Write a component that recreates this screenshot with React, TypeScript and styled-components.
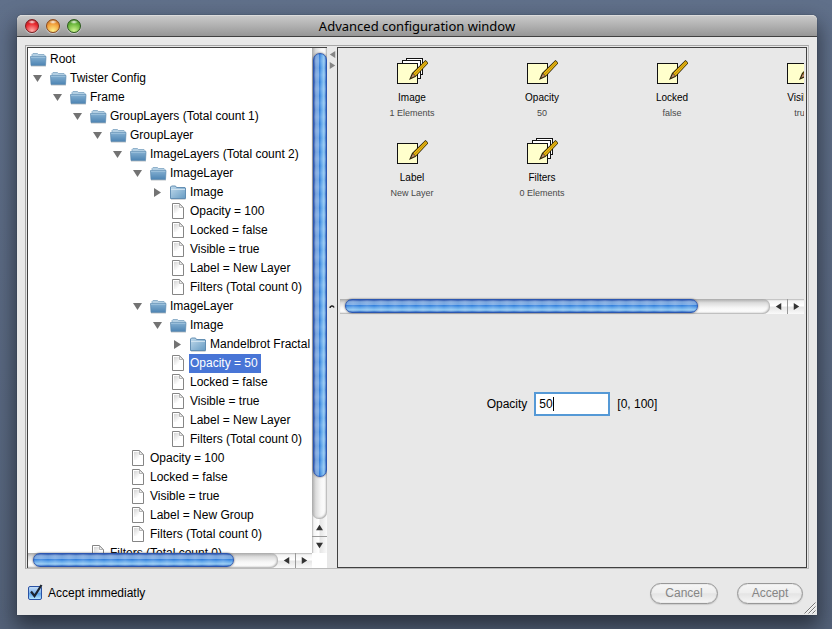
import React, { useState } from "react";
import styled, { createGlobalStyle, css } from "styled-components";

const GlobalStyle = createGlobalStyle`
  *, *::before, *::after { box-sizing: border-box; }
  body {
    margin: 0;
    font: 12px/19px "Liberation Sans", Arial, sans-serif;
    color: #000;
    background: linear-gradient(#60708a, #546279);
  }
  button, input { font: inherit; color: inherit; margin: 0; padding: 0; }
`;

const Desktop = styled.div`
  display: flex;
  height: 100vh;
  min-height: 400px;
  padding: 15px 15px 14px 17px;
  overflow: hidden;
`;

const Window = styled.main`
  flex: 1;
  min-width: 0;
  display: flex;
  flex-direction: column;
  background: #e8e8e8;
  border-radius: 5px 5px 0 0;
  box-shadow: 0 0 1px #1b212b, 0 10px 20px 2px rgba(16, 20, 26, 0.6);
`;

const TitleBar = styled.header`
  display: grid;
  grid-template-columns: 1fr auto 1fr;
  align-items: center;
  height: 22px;
  padding: 0 8px;
  border-radius: 5px 5px 0 0;
  border-top: 1px solid #dcdcdc;
  border-bottom: 1px solid #404040;
  background: linear-gradient(#c9c9c9, #969696);
`;

const Lights = styled.div`
  display: flex;
  gap: 7px;
`;

const Light = styled.button<{ $rim: string; $mid: string; $glow: string }>`
  width: 14px;
  height: 14px;
  border: 1px solid ${(p) => p.$rim};
  border-radius: 50%;
  background:
    radial-gradient(ellipse 4px 2px at 50% 2px, rgba(255, 255, 255, 0.9), rgba(255, 255, 255, 0) 100%),
    radial-gradient(circle at 50% 90%, ${(p) => p.$glow}, ${(p) => p.$mid} 60%, ${(p) => p.$rim} 110%);
  box-shadow: 0 1px 1px rgba(255, 255, 255, 0.5);
`;

const Title = styled.h1`
  margin: 0;
  font: 400 13px/20px "Noto Sans", "Open Sans", sans-serif;
  white-space: nowrap;
`;

const Frame = styled.div`
  flex: 1;
  min-height: 0;
  display: flex;
  margin: 8px 8px 0;
  padding: 1px 1px 0;
  border: 1px solid #a6a6a6;
  border-right-color: #bbb;
  border-bottom-color: #bbb;
`;

const TreePane = styled.section`
  flex: 0 0 300px;
  min-width: 0;
  display: grid;
  grid-template-columns: minmax(0, 1fr) 15px;
  grid-template-rows: minmax(0, 1fr) 15px;
  border-top: 1px solid #404040;
  border-left: 1px solid #404040;
  background: #fff;
`;

const Tree = styled.ul`
  margin: 0;
  padding: 2px;
  overflow: hidden;
  list-style: none;
`;

const TreeRow = styled.li<{ $depth: number }>`
  display: flex;
  align-items: center;
  height: 19px;
  padding-left: ${(p) => (p.$depth - 1) * 20}px;
  margin-right: -2px;
  white-space: nowrap;
`;

const Toggle = styled.button`
  flex: none;
  display: grid;
  place-items: center;
  width: 20px;
  height: 19px;
  padding-right: 5px;
  border: 0;
  background: none;
`;

const RootRow = styled(TreeRow)`
  padding-left: 0;
`;

const NodeIcon = styled.span`
  flex: none;
  display: grid;
  width: 19px;
  height: 19px;
`;

const NodeLabel = styled.span<{ $selected?: boolean }>`
  height: 19px;
  padding: 0 3px 0 1px;
  ${(p) =>
    p.$selected &&
    css`
      background: #4875d6;
      color: #fff;
    `}
`;

const aqua = (side: "right" | "bottom") => css`
  background:
    repeating-linear-gradient(
      to ${side === "right" ? "bottom" : "right"},
      rgba(255, 255, 255, 0) 0,
      rgba(255, 255, 255, 0.14) 7px,
      rgba(255, 255, 255, 0) 14px
    ),
    linear-gradient(
      to ${side},
      #2c55ac 0,
      #7ba5dc 15%,
      #78aae6 38%,
      #3380dd 46%,
      #64a8ea 64%,
      #93caf3 84%,
      #2d68c4 100%
    );
`;

const Bar = styled.div<{ $vertical?: boolean }>`
  display: flex;
  flex-direction: ${(p) => (p.$vertical ? "column" : "row")};
  background: linear-gradient(
    to ${(p) => (p.$vertical ? "right" : "bottom")},
    #b4b4b4,
    #f4f4f4 12%,
    #fff 45%,
    #e6e6e6 55%,
    #fafafa
  );
`;

const Track = styled.div<{ $vertical?: boolean }>`
  flex: 1;
  min-width: 0;
  min-height: 0;
  padding: ${(p) => (p.$vertical ? "5px 0 0 1px" : "0 0 0 5px")};
  border-radius: ${(p) => (p.$vertical ? "0 0 7px 7px" : "0 7px 7px 0")};
  background: linear-gradient(
    to ${(p) => (p.$vertical ? "right" : "bottom")},
    #a9a9a9,
    #dcdcdc 25%,
    #f7f7f7 60%,
    #fff
  );
  box-shadow: inset -1px -1px 2px #aaa;
`;

const Thumb = styled.div<{ $vertical?: boolean; $size: number }>`
  width: ${(p) => (p.$vertical ? "14px" : `${p.$size}%`)};
  height: ${(p) => (p.$vertical ? `${p.$size}%` : "14px")};
  border: 1px solid #2b56b0;
  border-radius: 7px;
  ${(p) => aqua(p.$vertical ? "right" : "bottom")}
  box-shadow: 0 0 2px #555;
`;

const Step = styled.button<{ $vertical?: boolean; $divided?: boolean }>`
  flex: none;
  display: grid;
  place-items: center;
  width: ${(p) => (p.$vertical ? "15px" : "17px")};
  height: ${(p) => (p.$vertical ? "17px" : "15px")};
  border: 0 solid #999;
  border-width: ${(p) => (p.$divided ? (p.$vertical ? "1px 0 0" : "0 0 0 1px") : "0")};
  background: none;
`;

const Splitter = styled.div`
  flex: 0 0 10px;
  display: flex;
  flex-direction: column;
  align-items: center;
  padding-top: 2px;
  background: #e8e8e8;
`;

const SplitButton = styled.button`
  display: grid;
  place-items: center;
  width: 9px;
  height: 11px;
  border: 0;
  background: none;
`;

const Grip = styled.div`
  flex: 1;
  display: grid;
  place-items: center;
  padding-bottom: 26px;
`;

const DetailPane = styled.section`
  flex: 1;
  min-width: 0;
  display: flex;
  flex-direction: column;
  padding: 0 2px;
  border: 1px solid #404040;
`;

const Items = styled.div`
  display: grid;
  grid-template-columns: repeat(4, 130px);
  grid-auto-rows: 80px;
  height: 251px;
  padding: 8px 7px;
  overflow: hidden;
`;

const Item = styled.button`
  display: flex;
  flex-direction: column;
  align-items: center;
  border: 0;
  background: none;
`;

const ItemName = styled.span`
  margin-top: 4px;
  font-size: 10px;
  line-height: 12px;
`;

const ItemInfo = styled.span`
  margin-top: 3px;
  font-size: 9px;
  line-height: 12px;
  color: #484848;
`;

const Editor = styled.form`
  flex: 1;
  display: flex;
  justify-content: center;
  align-items: flex-start;
  padding-top: 78px;
  line-height: 24px;
`;

const Field = styled.div`
  position: relative;
  margin: 0 7px;
`;

const FieldInput = styled.input`
  display: block;
  width: 76px;
  height: 24px;
  padding: 0 3px;
  border: 2px solid #5599d6;
  background: #fff;
  outline: 0;
  caret-color: transparent;
`;

const Caret = styled.span`
  position: absolute;
  top: 5px;
  width: 1px;
  height: 14px;
  background: #000;
  pointer-events: none;
`;

const Footer = styled.footer`
  flex: none;
  display: flex;
  align-items: center;
  justify-content: space-between;
  height: 46px;
  padding: 2px 0 0 11px;
`;

const CheckLabel = styled.label`
  position: relative;
  display: flex;
  align-items: center;
  gap: 6px;
`;

const CheckBox = styled.input`
  appearance: none;
  width: 14px;
  height: 14px;
  border: 1px solid #2a52a4;
  border-radius: 2px;
  background: linear-gradient(#c3dcf7, #7fb4ee 50%, #5ea5ec 55%, #b4e4fd);
`;

const Tick = styled.svg`
  position: absolute;
  left: 0;
  top: 0;
  pointer-events: none;
`;

const Actions = styled.div`
  align-self: stretch;
  display: flex;
  align-items: center;
`;

const PillButton = styled.button`
  width: 68px;
  height: 21px;
  margin-right: 19px;
  border: 1px solid #989898;
  border-radius: 11px;
  background: linear-gradient(#f6f6f6, #eee 45%, #e4e4e4 52%, #f6f6f6);
  box-shadow: inset 0 0 1px #999, 0 1px 1px #ccc;
  color: #858585;
  line-height: 18px;
  &:last-of-type { margin-right: 0; width: 66px; }
`;

const Resizer = styled.svg`
  align-self: flex-end;
  margin: 0 1px 1px;
`;

type Direction = "up" | "down" | "left" | "right";

const trianglePoints: Record<Direction, string> = {
  up: "0,8 4.5,1 9,8",
  down: "0,1 9,1 4.5,8",
  left: "8,0 8,9 1,4.5",
  right: "1,0 1,9 8,4.5",
};

function Triangle({ dir, size = 9, color = "#737373" }: { dir: Direction; size?: number; color?: string }) {
  return (
    <svg width={size} height={size} viewBox="0 0 9 9" aria-hidden="true">
      <polygon points={trianglePoints[dir]} fill={color} />
    </svg>
  );
}

function Gradients() {
  return (
    <svg width="0" height="0" style={{ position: "absolute" }} aria-hidden="true">
      <defs>
        <linearGradient id="folderOpen" x1="0" y1="0" x2="0" y2="1">
          <stop offset="0" stopColor="#86b1d2" />
          <stop offset="1" stopColor="#4d84b3" />
        </linearGradient>
        <linearGradient id="folderClosed" x1="0" y1="0" x2="1" y2="1">
          <stop offset="0" stopColor="#c2dbec" />
          <stop offset="1" stopColor="#669bc3" />
        </linearGradient>
        <linearGradient id="sheet" x1="0" y1="0" x2="1" y2="1">
          <stop offset="0" stopColor="#d4d4d4" />
          <stop offset="0.7" stopColor="#fff" />
        </linearGradient>
      </defs>
    </svg>
  );
}

function OpenFolder() {
  return (
    <svg width="17" height="19" viewBox="0 0 17 19" aria-hidden="true">
      <path d="M2 8V4.5l1-1h4.5l1 1H14l1 1V8z" fill="#b3cfe3" stroke="#7fa5c2" strokeWidth=".8" />
      <path d="M.5 6.500h15.500l-.5 9H1z" fill="url(#folderOpen)" stroke="#5886ad" strokeWidth=".7" />
      <path d="M1 7.200h14.500" stroke="#b4d2e7" strokeWidth=".7" />
      <path d="M1 16.200h15" stroke="#8c969e" strokeWidth=".7" opacity=".6" />
    </svg>
  );
}

function ClosedFolder() {
  return (
    <svg width="17" height="19" viewBox="0 0 17 19" aria-hidden="true">
      <path d="M.5 4l1-1h4l1 1.500H15l.5.5v10.500H.500z" fill="url(#folderClosed)" stroke="#5886ad" strokeWidth=".9" />
      <path d="M1 6.500h14" stroke="#d8e9f4" strokeWidth=".8" />
      <path d="M1 16.400h14.500" stroke="#8c969e" strokeWidth=".7" opacity=".6" />
    </svg>
  );
}

function Sheet() {
  return (
    <svg width="17" height="19" viewBox="0 0 17 19" aria-hidden="true">
      <path d="M2.500 1.500h7l4 4v11h-11z" fill="#fff" stroke="#858585" />
      <path d="M4 3h5v4h3v4H4z" fill="url(#sheet)" />
      <path d="M9.500 2v3.500H13z" fill="#f4f4f4" stroke="#a5a5a5" strokeWidth=".8" />
    </svg>
  );
}

function NoteIcon({ stacked }: { stacked?: boolean }) {
  return (
    <svg width="32" height="32" viewBox="0 0 32 32" aria-hidden="true">
      {stacked && (
        <g fill="#fff" stroke="#111">
          <rect x="10.500" y="2.500" width="16" height="16" />
          <rect x="6.500" y="4.500" width="18" height="18" />
        </g>
      )}
      <rect x="1.500" y="7.500" width="20" height="20" fill="#ffffcc" stroke="#111" />
      <path d="M13 24L16 17 29.500 4 32.500 7 19.500 21z" fill="#2b2207" />
      <path d="M15.200 21.800L16.900 17.700 19.200 20z" fill="#c49070" />
      <path d="M17.200 17.300L29.500 5 31.600 7 19.600 19.700z" fill="#f0bc12" />
      <path d="M18.400 18.500L30.500 6" stroke="#8c6808" strokeWidth=".6" />
    </svg>
  );
}

type Kind = "open" | "closed" | "leaf";
type Node = { depth: number; kind: Kind; label: string };

const nodes: Node[] = [
  { depth: 0, kind: "open", label: "Root" },
  { depth: 1, kind: "open", label: "Twister Config" },
  { depth: 2, kind: "open", label: "Frame" },
  { depth: 3, kind: "open", label: "GroupLayers (Total count 1)" },
  { depth: 4, kind: "open", label: "GroupLayer" },
  { depth: 5, kind: "open", label: "ImageLayers (Total count 2)" },
  { depth: 6, kind: "open", label: "ImageLayer" },
  { depth: 7, kind: "closed", label: "Image" },
  { depth: 7, kind: "leaf", label: "Opacity = 100" },
  { depth: 7, kind: "leaf", label: "Locked = false" },
  { depth: 7, kind: "leaf", label: "Visible = true" },
  { depth: 7, kind: "leaf", label: "Label = New Layer" },
  { depth: 7, kind: "leaf", label: "Filters (Total count 0)" },
  { depth: 6, kind: "open", label: "ImageLayer" },
  { depth: 7, kind: "open", label: "Image" },
  { depth: 8, kind: "closed", label: "Mandelbrot Fractal" },
  { depth: 7, kind: "leaf", label: "Opacity = 50" },
  { depth: 7, kind: "leaf", label: "Locked = false" },
  { depth: 7, kind: "leaf", label: "Visible = true" },
  { depth: 7, kind: "leaf", label: "Label = New Layer" },
  { depth: 7, kind: "leaf", label: "Filters (Total count 0)" },
  { depth: 5, kind: "leaf", label: "Opacity = 100" },
  { depth: 5, kind: "leaf", label: "Locked = false" },
  { depth: 5, kind: "leaf", label: "Visible = true" },
  { depth: 5, kind: "leaf", label: "Label = New Group" },
  { depth: 5, kind: "leaf", label: "Filters (Total count 0)" },
  { depth: 3, kind: "leaf", label: "Filters (Total count 0)" },
];

const items = [
  { name: "Image", info: "1 Elements", stacked: true },
  { name: "Opacity", info: "50" },
  { name: "Locked", info: "false" },
  { name: "Visible", info: "true" },
  { name: "Label", info: "New Layer" },
  { name: "Filters", info: "0 Elements", stacked: true },
];

const icons = { open: OpenFolder, closed: ClosedFolder, leaf: Sheet };

function TreeNode({ node, selected, onSelect }: { node: Node; selected: boolean; onSelect: () => void }) {
  const Icon = icons[node.kind];
  const Row = node.depth === 0 ? RootRow : TreeRow;
  return (
    <Row $depth={node.depth} role="treeitem" aria-level={node.depth + 1} aria-selected={selected} onClick={onSelect}>
      {node.depth > 0 &&
        (node.kind === "leaf" ? (
          <Toggle as="span" />
        ) : (
          <Toggle type="button" aria-label={`Toggle ${node.label}`}>
            <Triangle dir={node.kind === "open" ? "down" : "right"} />
          </Toggle>
        ))}
      <NodeIcon>
        <Icon />
      </NodeIcon>
      <NodeLabel $selected={selected}>{node.label}</NodeLabel>
    </Row>
  );
}

function ScrollBar({ vertical, size }: { vertical?: boolean; size: number }) {
  return (
    <Bar $vertical={vertical}>
      <Track $vertical={vertical}>
        <Thumb $vertical={vertical} $size={size} />
      </Track>
      <Step $vertical={vertical} type="button" aria-label="Scroll back">
        <Triangle dir={vertical ? "up" : "left"} size={7} color="#333" />
      </Step>
      <Step $vertical={vertical} $divided type="button" aria-label="Scroll forward">
        <Triangle dir={vertical ? "down" : "right"} size={7} color="#333" />
      </Step>
    </Bar>
  );
}

export default function App() {
  const [selected, setSelected] = useState(16);
  const [opacity, setOpacity] = useState("50");
  const [immediate, setImmediate] = useState(true);

  return (
    <Desktop>
      <GlobalStyle />
      <Gradients />
      <Window>
        <TitleBar>
          <Lights>
            <Light type="button" aria-label="Close" $rim="#7c1c20" $mid="#e8262c" $glow="#ffb0ac" />
            <Light type="button" aria-label="Minimize" $rim="#8d4a1c" $mid="#f29c38" $glow="#fff08a" />
            <Light type="button" aria-label="Zoom" $rim="#2c5a1c" $mid="#68b53a" $glow="#d0f590" />
          </Lights>
          <Title>Advanced configuration window</Title>
        </TitleBar>
        <Frame>
          <TreePane>
            <Tree role="tree">
              {nodes.map((node, i) => (
                <TreeNode key={i} node={node} selected={i === selected} onSelect={() => setSelected(i)} />
              ))}
            </Tree>
            <ScrollBar vertical size={91} />
            <ScrollBar size={82} />
          </TreePane>
          <Splitter>
            <SplitButton type="button" aria-label="Collapse left">
              <Triangle dir="left" size={7} color="#858585" />
            </SplitButton>
            <SplitButton type="button" aria-label="Collapse right">
              <Triangle dir="right" size={7} color="#858585" />
            </SplitButton>
            <Grip>
              <svg width="6" height="4" viewBox="0 0 6 4" aria-hidden="true">
                <path d="M1 3C1 1 4 0 5 2.500" fill="none" stroke="#222" strokeWidth="1.500" />
              </svg>
            </Grip>
          </Splitter>
          <DetailPane>
            <Items>
              {items.map((item) => (
                <Item key={item.name} type="button">
                  <NoteIcon stacked={item.stacked} />
                  <ItemName>{item.name}</ItemName>
                  <ItemInfo>{item.info}</ItemInfo>
                </Item>
              ))}
            </Items>
            <ScrollBar size={83} />
            <Editor onSubmit={(e) => e.preventDefault()}>
              <label htmlFor="opacity">Opacity</label>
              <Field>
                <FieldInput id="opacity" value={opacity} onChange={(e) => setOpacity(e.target.value)} />
                <Caret style={{ left: `calc(5px + ${opacity.length}ch)` }} />
              </Field>
              <span>[0, 100]</span>
            </Editor>
          </DetailPane>
        </Frame>
        <Footer>
          <CheckLabel>
            <CheckBox type="checkbox" checked={immediate} onChange={(e) => setImmediate(e.target.checked)} />
            {immediate && (
              <Tick width="16" height="16" viewBox="0 0 16 16" aria-hidden="true">
                <path d="M3 7.500l3.500 4.500L13.500 1" fill="none" stroke="#1c2430" strokeWidth="2.200" />
              </Tick>
            )}
            Accept immediatly
          </CheckLabel>
          <Actions>
            <PillButton type="button">Cancel</PillButton>
            <PillButton type="button">Accept</PillButton>
            <Resizer width="12" height="12" viewBox="0 0 12 12" aria-hidden="true">
              <path d="M.5 11.500l11-11M4.500 11.500l7-7M8.500 11.500l3-3" stroke="#777" />
              <path d="M1.500 11.500l10-10M5.500 11.500l6-6M9.500 11.500l2-2" stroke="#fff" strokeWidth=".6" />
            </Resizer>
          </Actions>
        </Footer>
      </Window>
    </Desktop>
  );
}
